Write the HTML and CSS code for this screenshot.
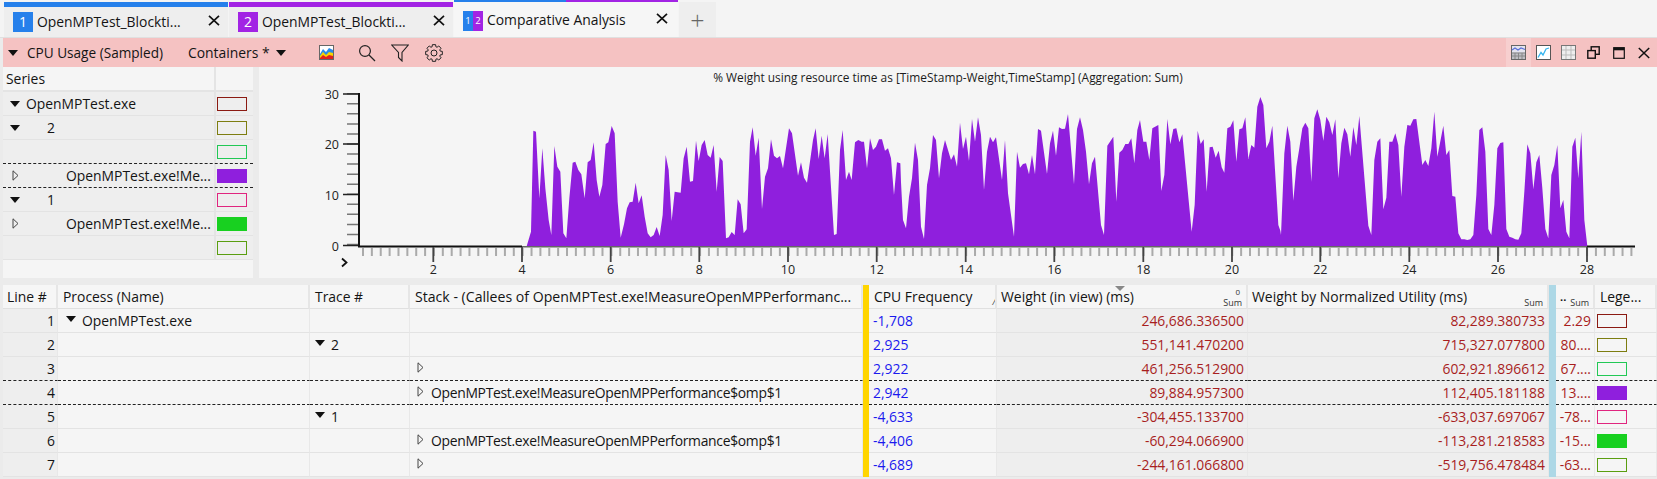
FILE: index.html
```html
<!DOCTYPE html>
<html lang="en">
<head>
<meta charset="utf-8">
<title>Comparative Analysis</title>
<link rel="stylesheet" href="styles.css">
</head>
<body>
<svg class="defs" width="0" height="0" aria-hidden="true">
  <symbol id="ex" viewBox="0 0 7 11"><path d="M1 .8 L6 5.5 L1 10.2 Z" fill="none" stroke="#444" stroke-width="1"/></symbol>
  <symbol id="close" viewBox="0 0 12 11"><path d="M1 .8L11 10.200M11 .8L1 10.200" fill="none" stroke="#111" stroke-width="1.700"/></symbol>
</svg>
<div class="tabs">
  <div class="tab tab-blue"><span class="badge badge-blue">1</span><span class="tab-title">OpenMPTest_Blockti...</span><svg class="tab-x"><use href="#close"/></svg></div>
  <div class="tab tab-purple"><span class="badge badge-purple">2</span><span class="tab-title">OpenMPTest_Blockti...</span><svg class="tab-x"><use href="#close"/></svg></div>
  <div class="tab tab-active"><span class="badge-pair"><span class="badge-half badge-blue">1</span><span class="badge-half badge-purple">2</span></span><span class="tab-title">Comparative Analysis</span><svg class="tab-x"><use href="#close"/></svg></div>
  <div class="tab-add">+</div>
</div>
<div class="toolbar">
  <span class="tri tool-tri"></span>
  <span class="tool-title">CPU Usage (Sampled)</span>
  <span class="tool-preset">Containers *</span>
  <span class="tri tool-caret"></span>
  <svg class="ico ico-heat" viewBox="0 0 15 15"><rect x=".5" y=".5" width="14" height="14" fill="#fff" stroke="#666"/><path d="M1 14V9L4 4L7 7L10 3L14 5V14Z" fill="#2a8be8"/><path d="M1 14V11L4 7L7 10L10 7L14 8V14Z" fill="#f6d400"/><path d="M1 14V13L4 10L7 12L10 10L14 11V14Z" fill="#e02020"/></svg>
  <svg class="ico ico-search" viewBox="0 0 18 18" fill="none" stroke="#222" stroke-width="1.2"><circle cx="7" cy="7" r="5.4"/><path d="M11 11L17 17"/></svg>
  <svg class="ico ico-filter" viewBox="0 0 18 18" fill="none" stroke="#222" stroke-width="1.1"><path d="M.7 1H17.3L11 8.5V17L7.5 13.5V8.5Z"/></svg>
  <svg class="ico ico-gear" viewBox="-9 -9 18 18" fill="none" stroke="#222" stroke-width="1"><polygon points="8.34,-1.62 8.34,1.62 6.22,1.9 5.74,3.05 7.05,4.75 4.75,7.05 3.05,5.74 1.9,6.22 1.62,8.34 -1.62,8.34 -1.9,6.22 -3.05,5.74 -4.75,7.05 -7.05,4.75 -5.74,3.05 -6.22,1.9 -8.34,1.62 -8.34,-1.62 -6.22,-1.9 -5.74,-3.05 -7.05,-4.75 -4.75,-7.05 -3.05,-5.74 -1.9,-6.22 -1.62,-8.34 1.62,-8.34 1.9,-6.22 3.05,-5.74 4.75,-7.05 7.05,-4.75 5.74,-3.05 6.22,-1.9"/><circle r="3"/></svg>
  <div class="tool-right">
    <span class="tbtn tbtn-on"><svg class="ico15" viewBox="0 0 15 15"><rect x=".5" y=".5" width="14" height="14" fill="#e4e4ee" stroke="#666"/><path d="M1 8H14M1 11H14M4 8V14M7.5 8V14M11 8V14" stroke="#777"/><rect x="1" y="8" width="13" height="6" fill="#999" opacity=".5"/><path d="M1 5L4 3L7 5L10 3L14 4.5" fill="none" stroke="#5a6fd8" stroke-width="1.2"/></svg></span>
    <span class="tbtn"><svg class="ico15" viewBox="0 0 15 15"><rect x=".5" y=".5" width="14" height="14" fill="#fff" stroke="#555"/><path d="M2 12.5L5 7.5L7 10L10 4L13 3" fill="none" stroke="#36b4ee" stroke-width="1.3"/></svg></span>
    <span class="tbtn"><svg class="ico15" viewBox="0 0 15 15"><rect x=".5" y=".5" width="14" height="14" fill="#eee" stroke="#777"/><path d="M1 5H14M1 10H14M5 1V14M10 1V14" stroke="#bbb"/></svg></span>
    <span class="tbtn"><svg class="ico13" viewBox="0 0 13 13" fill="none" stroke="#111" stroke-width="1.4"><rect x="4.2" y=".8" width="8" height="7.5"/><rect x=".8" y="4.6" width="7.5" height="7.6" fill="#f5c2c2"/></svg></span>
    <span class="tbtn"><svg class="ico12" viewBox="0 0 12 12" fill="none" stroke="#111"><rect x=".7" y=".7" width="10.6" height="10.6" stroke-width="1.2"/><path d="M1 2H11" stroke-width="2.6"/></svg></span>
    <span class="tbtn"><svg class="ico12" viewBox="0 0 12 12" fill="none" stroke="#111" stroke-width="1.5"><path d="M.8 1L11.2 11M11.2 1L.8 11"/></svg></span>
  </div>
</div>
<div class="graph">
  <div class="series">
    <div class="s-head"><span class="s-name">Series</span><span class="s-leg"></span></div>
    <div class="s-row"><span class="s-name"><span class="twist"><span class="tri"></span></span>OpenMPTest.exe</span><span class="s-leg"><i class="sw sw-red"></i></span></div>
    <div class="s-row"><span class="s-name"><span class="twist"><span class="tri"></span></span><span class="lvl1">2</span></span><span class="s-leg"><i class="sw sw-olive"></i></span></div>
    <div class="s-row s-dash"><span class="s-name"></span><span class="s-leg"><i class="sw sw-green"></i></span></div>
    <div class="s-row s-dash"><span class="s-name"><span class="twist"><svg class="ex"><use href="#ex"/></svg></span><span class="lvl2">OpenMPTest.exe!Me...</span></span><span class="s-leg"><i class="sw sw-purple"></i></span></div>
    <div class="s-row"><span class="s-name"><span class="twist"><span class="tri"></span></span><span class="lvl1">1</span></span><span class="s-leg"><i class="sw sw-pink"></i></span></div>
    <div class="s-row"><span class="s-name"><span class="twist"><svg class="ex"><use href="#ex"/></svg></span><span class="lvl2">OpenMPTest.exe!Me...</span></span><span class="s-leg"><i class="sw sw-lime"></i></span></div>
    <div class="s-row"><span class="s-name"></span><span class="s-leg"><i class="sw sw-moss"></i></span></div>
  </div>
  <div class="chart">
    <svg class="plot" viewBox="259 67 1398 211" width="1398" height="211">
      <text class="c-title" x="948" y="82">% Weight using resource time as [TimeStamp-Weight,TimeStamp] (Aggregation: Sum)</text>
      <g class="area">
        <g transform="translate(500 85) scale(.33333)"><polygon points="80,484 90,450 93,440 100,137 108,140 118,340 127,190 136,310 146,405 154,450 163,183 172,245 181,260 190,445 199,460 208,340 218,233 226,230 235,255 244,268 254,340 263,232 272,225 281,172 290,285 298,335 307,300 317,177 325,172 335,123 344,145 353,350 362,458 372,418 381,370 389,352 398,350 407,293 416,355 425,331 434,395 443,445 452,457 461,450 470,426 479,453 488,390 497,210 506,255 515,408 524,320 542,323 551,220 560,185 570,290 579,288 588,167 596,228 605,180 614,165 623,210 632,218 641,180 650,320 659,216 668,228 678,460 686,457 695,441 704,450 713,343 722,358 731,445 740,433 750,170 758,127 767,212 776,158 786,372 795,275 804,250 813,163 822,212 831,220 840,213 849,250 867,130 876,145 894,272 903,232 912,278 921,293 939,165 947,130 956,222 965,152 974,220 983,147 1002,450 1010,447 1020,195 1028,135 1038,285 1047,260 1055,285 1065,172 1075,165 1085,170 1092,170 1101,250 1110,160 1119,195 1128,185 1137,163 1146,163 1155,197 1164,190 1173,220 1182,330 1191,232 1201,235 1201,484"/></g>
        <g transform="translate(900 85) scale(.33333)"><polygon points="0,235 9,405 18,430 27,335 36,280 45,173 54,225 63,425 72,462 81,300 90,250 99,150 108,165 117,280 126,205 135,165 153,225 162,208 171,245 180,113 189,192 198,155 207,228 216,102 225,170 234,97 243,150 252,315 261,200 270,155 279,172 288,157 306,285 315,165 324,325 342,455 351,200 360,248 369,237 378,235 387,268 396,210 405,268 414,132 423,137 441,267 450,175 459,137 468,212 477,127 486,132 495,131 504,87 522,298 531,132 540,97 549,135 558,200 567,298 576,235 585,215 603,420 612,450 622,182 640,155 649,350 658,203 667,195 676,177 685,177 694,160 703,235 712,135 720,105 730,170 739,170 748,225 757,130 775,120 784,318 793,270 802,102 811,178 820,132 829,130 838,172 847,148 875,440 884,360 893,137 902,177 911,163 920,320 929,187 938,185 947,218 956,197 965,247 973,263 982,130 991,125 1000,106 1009,230 1018,133 1027,130 1036,97 1045,222 1054,180 1063,188 1072,65 1081,36 1090,60 1099,190 1108,170 1117,122 1135,420 1141,437 1141,484 0,484"/></g>
        <g transform="translate(1277 85) scale(.33333)"><polygon points="9,437 12,450 22,205 31,122 40,170 49,347 58,245 67,190 76,130 85,113 94,130 103,290 112,100 121,73 130,105 139,167 148,95 157,112 166,150 175,103 184,280 193,175 202,128 211,148 220,215 229,126 238,180 247,93 274,422 283,450 292,225 301,170 310,160 319,373 328,338 337,170 346,170 355,145 364,180 373,335 382,185 391,120 400,122 409,103 418,102 436,240 445,225 454,243 463,190 472,80 481,215 499,122 508,210 517,195 526,333 535,335 544,445 553,463 562,463 571,465 580,463 589,450 598,330 607,135 616,127 625,200 634,432 643,450 652,360 661,190 670,174 679,172 688,432 697,455 706,458 715,463 724,464 733,445 742,320 751,178 760,205 769,313 778,232 787,210 796,310 805,432 814,460 823,270 832,240 841,180 850,370 859,345 868,440 877,460 886,185 895,158 904,280 913,140 922,405 931,484 9,484"/></g>
      </g>
      <line class="minor" x1="353" y1="93" x2="353" y2="246"/>
      <path class="major" d="M343 94H359M343 144H359M343 194.500H359M343 245.500H359"/>
      <path class="axis" d="M359 93V246.500H522M1587 246.500H1635"/>
      <line class="base" x1="522" y1="246.700" x2="1587" y2="246.700"/>
      <line class="xminor" x1="362" y1="252" x2="1635" y2="252"/>
      <path class="xmajor" d="M433.300 247V262M522 247V262M610.700 247V262M699.300 247V262M788 247V262M876.700 247V262M965.700 247V262M1054.300 247V262M1143.300 247V262M1232 247V262M1320.300 247V262M1409.300 247V262M1498 247V262M1587 247V262"/>
      <text class="ylab" x="339" y="99">30</text>
      <text class="ylab" x="339" y="149">20</text>
      <text class="ylab" x="339" y="200">10</text>
      <text class="ylab" x="339" y="251">0</text>
      <text class="xlab" x="433.300" y="274">2</text>
      <text class="xlab" x="522" y="274">4</text>
      <text class="xlab" x="610.700" y="274">6</text>
      <text class="xlab" x="699.300" y="274">8</text>
      <text class="xlab" x="788" y="274">10</text>
      <text class="xlab" x="876.700" y="274">12</text>
      <text class="xlab" x="965.700" y="274">14</text>
      <text class="xlab" x="1054.300" y="274">16</text>
      <text class="xlab" x="1143.300" y="274">18</text>
      <text class="xlab" x="1232" y="274">20</text>
      <text class="xlab" x="1320.300" y="274">22</text>
      <text class="xlab" x="1409.300" y="274">24</text>
      <text class="xlab" x="1498" y="274">26</text>
      <text class="xlab" x="1587" y="274">28</text>
      <path class="chev" d="M342 258.500L346.500 262.500L342 266.500"/>
    </svg>
  </div>
</div>
<div class="table">
  <div class="bar bar-yellow"></div>
  <div class="bar bar-blue"></div>

  <div class="th th-first">Line #</div>
  <div class="th">Process (Name)</div>
  <div class="th">Trace #</div>
  <div class="th th-wide">Stack - (Callees of OpenMPTest.exe!MeasureOpenMPPerformanc...</div>
  <div class="th">CPU Frequency<span class="mini-mark">&#x2044;</span></div>
  <div class="th th-tight">Weight (in view) (ms)<span class="sort"></span><span class="mini mini-top">0</span><span class="mini">Sum</span></div>
  <div class="th th-tight">Weight by Normalized Utility (ms)<span class="mini">Sum</span></div>
  <div class="th th-tight"><span class="dots">..</span><span class="mini">Sum</span></div>
  <div class="th">Lege...</div>

  <div class="td td-n">1</div><div class="td"><span class="tri tri-p"></span>OpenMPTest.exe</div><div class="td"></div><div class="td"></div><div class="td td-f">-1,708</div><div class="td td-g td-v">246,686.336500</div><div class="td td-g td-v">82,289.380733</div><div class="td td-v">2.29</div><div class="td td-l"><i class="sw sw-red"></i></div>

  <div class="td td-n">2</div><div class="td"></div><div class="td"><span class="tri tri-t"></span>2</div><div class="td"></div><div class="td td-f">2,925</div><div class="td td-g td-v">551,141.470200</div><div class="td td-g td-v">715,327.077800</div><div class="td td-v">80....</div><div class="td td-l"><i class="sw sw-olive"></i></div>

  <div class="td td-n d">3</div><div class="td d"></div><div class="td d"></div><div class="td d"><svg class="ex ex-t"><use href="#ex"/></svg></div><div class="td td-f d">2,922</div><div class="td td-g td-v d">461,256.512900</div><div class="td td-g td-v d">602,921.896612</div><div class="td td-v d">67....</div><div class="td td-l d"><i class="sw sw-green"></i></div>

  <div class="td td-n d">4</div><div class="td d"></div><div class="td d"></div><div class="td d"><svg class="ex ex-t"><use href="#ex"/></svg><span class="st">OpenMPTest.exe!MeasureOpenMPPerformance$omp$1</span></div><div class="td td-f d">2,942</div><div class="td td-g td-v d">89,884.957300</div><div class="td td-g td-v d">112,405.181188</div><div class="td td-v d">13....</div><div class="td td-l d"><i class="sw sw-purple"></i></div>

  <div class="td td-n">5</div><div class="td"></div><div class="td"><span class="tri tri-t"></span>1</div><div class="td"></div><div class="td td-f">-4,633</div><div class="td td-g td-v">-304,455.133700</div><div class="td td-g td-v">-633,037.697067</div><div class="td td-v">-78...</div><div class="td td-l"><i class="sw sw-pink"></i></div>

  <div class="td td-n">6</div><div class="td"></div><div class="td"></div><div class="td"><svg class="ex ex-t"><use href="#ex"/></svg><span class="st">OpenMPTest.exe!MeasureOpenMPPerformance$omp$1</span></div><div class="td td-f">-4,406</div><div class="td td-g td-v">-60,294.066900</div><div class="td td-g td-v">-113,281.218583</div><div class="td td-v">-15...</div><div class="td td-l"><i class="sw sw-lime"></i></div>

  <div class="td td-n">7</div><div class="td"></div><div class="td"></div><div class="td"><svg class="ex ex-t"><use href="#ex"/></svg></div><div class="td td-f">-4,689</div><div class="td td-g td-v">-244,161.066800</div><div class="td td-g td-v">-519,756.478484</div><div class="td td-v">-63...</div><div class="td td-l"><i class="sw sw-moss"></i></div>
</div>
</body>
</html>
```
FILE: styles.css
```css
* { box-sizing: border-box; }
html, body { margin: 0; padding: 0; }
body {
  width: 1657px;
  height: 479px;
  overflow: hidden;
  background: #ebebeb;
  color: #141414;
  font: 13.9px/20px "Open Sans", "Noto Sans", sans-serif;
}
.defs { display: block; height: 0; }

/* tabs */
.tabs { display: flex; height: 38px; padding-left: 4px; background: #f4f4f4; border-bottom: 1px solid #e0e0e0; }
.tab { display: flex; align-items: center; width: 224px; margin: 2px 1px 0 0; padding: 0 8px 0 9px; background: #eeeeee; border-top: 5px solid; }
.tab-blue { border-color: #2680eb; }
.tab-purple { border-color: #a224e4; }
.tab-active { margin-top: 0; padding: 2px 10px 0 9px; background: #f6f6f6; border-top: 0; background-image: linear-gradient(90deg, #2680eb 50%, #a224e4 50%); background-size: 100% 2px; background-repeat: no-repeat; }
.badge { display: flex; align-items: center; justify-content: center; width: 20px; height: 20px; color: #fff; font-size: 14px; }
.badge-blue { background: #2680eb; }
.badge-purple { background: #a224e4; }
.badge-pair { display: flex; margin-top: 2px; }
.badge-half { display: flex; align-items: center; justify-content: center; width: 10px; height: 20px; color: #fff; font-size: 9.500px; }
.tab-title { margin-left: 4px; flex: 1; white-space: nowrap; }
.tab-x { display: block; width: 12px; height: 11px; flex: none; margin-bottom: 3px; }
.tab-add { display: flex; align-items: center; justify-content: center; width: 37px; margin-top: 2px; background: #eeeeee; color: #666; font-size: 25px; font-weight: 300; }

/* toolbar */
.tri { display: inline-block; width: 0; height: 0; border-left: 5.500px solid transparent; border-right: 5.500px solid transparent; border-top: 6px solid #111; }
.toolbar { display: flex; align-items: center; height: 29px; margin-left: 3px; background: #f5c2c2; }
.tool-tri { margin-left: 5px; }
.tool-title { margin-left: 9px; width: 161px; white-space: nowrap; font-size: 13.600px; }
.tool-preset { white-space: nowrap; width: 88px; }
.tool-caret { border-left-width: 5px; border-right-width: 5px; }
.ico { display: block; flex: none; }
.ico-heat { width: 15px; height: 15px; margin-left: 33px; }
.ico-search { width: 18px; height: 18px; margin-left: 24px; }
.ico-filter { width: 18px; height: 18px; margin-left: 15px; }
.ico-gear { width: 18px; height: 18px; margin-left: 16px; }
.tool-right { display: flex; margin-left: auto; margin-right: 1px; align-self: stretch; }
.tbtn { display: flex; align-items: center; justify-content: center; width: 25px; }
.tbtn-on { background: #f7cfcf; }
.ico15 { width: 15px; height: 15px; display: block; }
.ico13 { width: 13px; height: 13px; display: block; }
.ico12 { width: 12px; height: 12px; display: block; }

/* graph */
.graph { display: flex; height: 211px; margin-left: 3px; }
.series { width: 250px; background: #f5f5f5; }
.s-head { display: flex; height: 25px; background: #f5f5f5; border-bottom: 2px solid #e4e4e4; }
.s-head .s-name { padding-left: 3px; }
.s-row { display: flex; height: 24px; background: #eeeeee; border-bottom: 1px solid #e3e3e3; }
.s-dash { border-bottom: 1px dashed #222; }
.s-name { display: flex; align-items: center; width: 213px; padding-left: 7px; border-right: 2px solid #e4e4e4; white-space: nowrap; }
.s-leg { display: flex; align-items: center; padding-left: 1px; flex: 1; }
.twist { display: flex; width: 16px; height: 100%; align-items: center; flex: none; }
.lvl1 { margin-left: 21px; }
.lvl2 { margin-left: 40px; }
.ex { display: block; width: 7px; height: 11px; margin-left: 2px; flex: none; }
.sw { display: block; width: 30px; height: 14px; border: 1px solid; }
.sw-red { border-color: #8b1a12; }
.sw-olive { border-color: #7d7d10; }
.sw-green { border-color: #22c855; }
.sw-purple { border-color: #8f1fdd; background: #8f1fdd; }
.sw-pink { border-color: #e0257f; }
.sw-lime { border-color: #18d020; background: #18d020; }
.sw-moss { border-color: #5a9e10; }
.chart { margin-left: 6px; flex: 1; background: #f5f5f5; }
.plot { display: block; }
.c-title { font-size: 11.900px; text-anchor: middle; fill: #1c1c1c; }
.area polygon { fill: #8f1fdd; }
.minor { stroke: #777; stroke-width: 12; stroke-dasharray: 1.500 8.550; }
.major { stroke: #222; stroke-width: 1.500; fill: none; }
.axis { stroke: #111; stroke-width: 2; fill: none; }
.base { stroke: #666; stroke-width: 1.500; }
.xminor { stroke: #aaa; stroke-width: 8; stroke-dasharray: 2 6.870; }
.xmajor { stroke: #444; stroke-width: 1.800; fill: none; }
.ylab { font-size: 12.500px; text-anchor: end; fill: #222; }
.xlab { font-size: 12.500px; text-anchor: middle; fill: #222; }
.chev { stroke: #111; stroke-width: 1.800; fill: none; }

/* table */
.table {
  display: grid;
  grid-template-columns: 55px 252px 100px 453px 6px 128px 251px 301px 7px 39px 62px;
  margin: 7px 0 0 3px;
}
.bar { grid-row: 1 / span 8; }
.bar-yellow { grid-column: 5; background: #ffd500; }
.bar-blue { grid-column: 9; background: #add8e6; }
.th { position: relative; display: flex; align-items: center; height: 24px; padding-left: 5px; background: #f6f6f6; border-right: 2px solid #e6e6e6; border-bottom: 1px solid #e0e0e0; white-space: nowrap; overflow: hidden; }
.th-first { padding-left: 4px; }
.th-wide { font-size: 14.100px; }
.th-tight { padding-left: 4px; }
.td { display: flex; align-items: center; height: 24px; padding: 1px 0 0 0; background: #f5f5f5; border-bottom: 1px solid #e3e3e3; border-right: 1px solid #e8e8e8; white-space: nowrap; overflow: hidden; }
.d { border-bottom: 1px dashed #222; }
.td-n { justify-content: flex-end; padding-right: 2px; background: #eeeeee; }
.td-g { background: #eeeeee; }
.td-f { padding-left: 4px; color: #1a1aee; }
.td-v { justify-content: flex-end; padding-right: 3px; color: #a81e1e; }
.td-l { padding-left: 2px; }
.tri-p { margin: 0 6px 4px 8px; }
.tri-t { margin: 0 6px 4px 5px; }
.ex-t { margin: 0 7px 4px 7px; }
.st { letter-spacing: -.3px; }
.mini { position: absolute; right: 4px; bottom: -1px; font-size: 9px; line-height: 12px; color: #333; }
.mini-top { bottom: 10px; right: 6px; font-size: 8px; }
.mini-mark { position: absolute; right: 0; bottom: 0; font-size: 9px; line-height: 12px; }
.sort { position: absolute; left: 118px; top: 1px; width: 0; height: 0; border-left: 5px solid transparent; border-right: 5px solid transparent; border-top: 5px solid #888; }
.dots { font-weight: 700; font-size: 11px; line-height: 20px; }
```
